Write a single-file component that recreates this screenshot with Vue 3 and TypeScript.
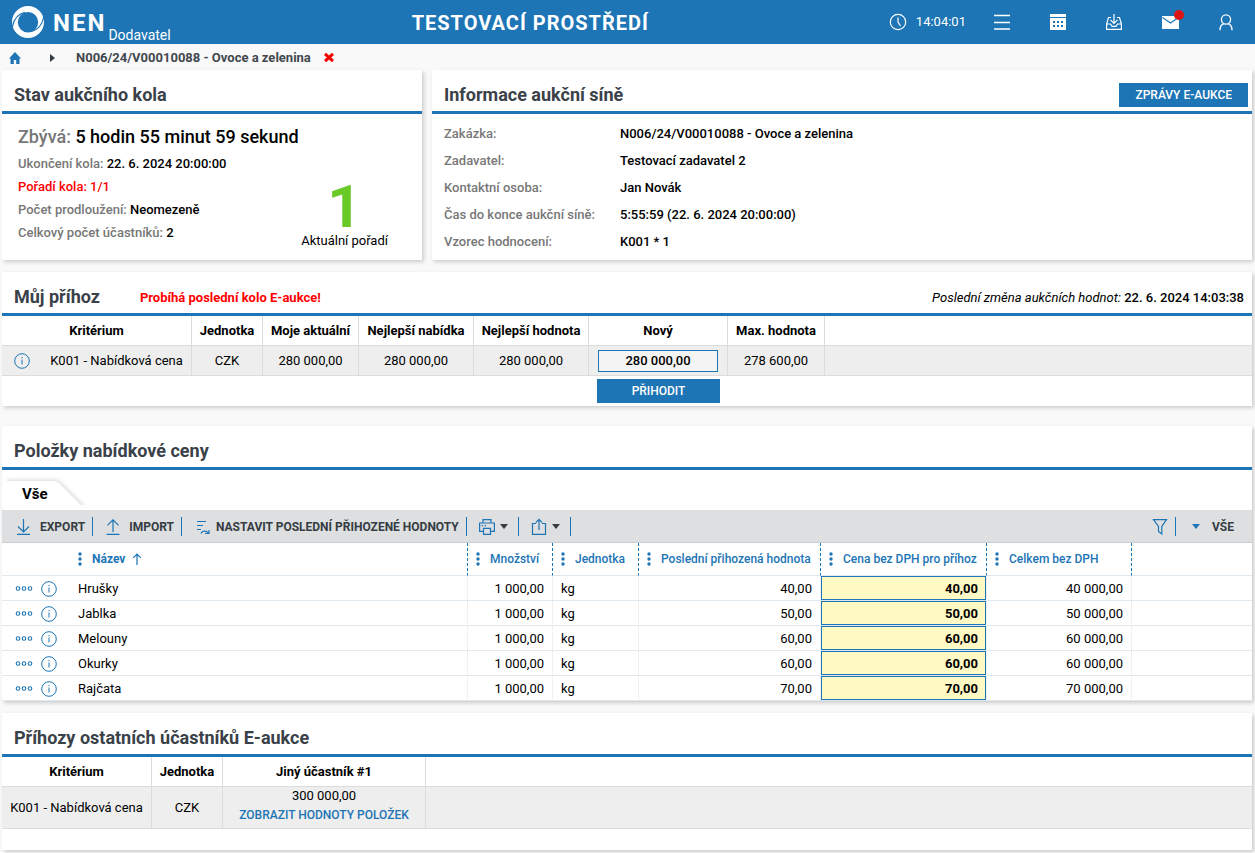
<script setup lang="ts">
import { ref } from 'vue'

interface Item {
  name: string
  quantity: string
  unit: string
  last: string
  price: string
  total: string
}

const items = ref<Item[]>([
  { name: 'Hrušky', quantity: '1 000,00', unit: 'kg', last: '40,00', price: '40,00', total: '40 000,00' },
  { name: 'Jablka', quantity: '1 000,00', unit: 'kg', last: '50,00', price: '50,00', total: '50 000,00' },
  { name: 'Melouny', quantity: '1 000,00', unit: 'kg', last: '60,00', price: '60,00', total: '60 000,00' },
  { name: 'Okurky', quantity: '1 000,00', unit: 'kg', last: '60,00', price: '60,00', total: '60 000,00' },
  { name: 'Rajčata', quantity: '1 000,00', unit: 'kg', last: '70,00', price: '70,00', total: '70 000,00' },
])

const columns: string[] = [
  'Množství',
  'Jednotka',
  'Poslední přihozená hodnota',
  'Cena bez DPH pro příhoz',
  'Celkem bez DPH',
]

const roundInfo: { label: string; value: string; alert?: boolean }[] = [
  { label: 'Ukončení kola:', value: '22. 6. 2024 20:00:00' },
  { label: 'Pořadí kola:', value: '1/1', alert: true },
  { label: 'Počet prodloužení:', value: 'Neomezeně' },
  { label: 'Celkový počet účastníků:', value: '2' },
]

const hallInfo: { label: string; value: string }[] = [
  { label: 'Zakázka:', value: 'N006/24/V00010088 - Ovoce a zelenina' },
  { label: 'Zadavatel:', value: 'Testovací zadavatel 2' },
  { label: 'Kontaktní osoba:', value: 'Jan Novák' },
  { label: 'Čas do konce aukční síně:', value: '5:55:59 (22. 6. 2024 20:00:00)' },
  { label: 'Vzorec hodnocení:', value: 'K001 * 1' },
]

const newBid = ref('280 000,00')
</script>

<template>
  <div class="page">
    <header class="topbar">
      <a href="#" class="brand">
        <svg class="logo" viewBox="0 0 32 32" aria-hidden="true">
          <path fill="#fff" fill-rule="evenodd" d="M16 0C24.800 0 32 7.200 32 16S24.800 32 16 32 0 24.800 0 16 7.200 0 16 0ZM16 6A10.200 10.200 0 1 0 16 26.400A10.200 10.200 0 1 0 16 6Z" />
          <path fill="none" stroke="#1d75b5" stroke-width="1.100" d="M0.300 21.500C1.500 14 6 8 13 6.400" />
          <path fill="none" stroke="#1d75b5" stroke-width="1.100" d="M31.700 10.500C30.500 18 26 24 19 25.600" />
        </svg>
        <span class="brand-name">NEN</span>
        <span class="brand-role">Dodavatel</span>
      </a>
      <h1 class="env">TESTOVACÍ PROSTŘEDÍ</h1>
      <nav class="tools" aria-label="Hlavní nabídka">
        <span class="clock">
          <svg class="ico18" viewBox="0 0 18 18" aria-hidden="true">
            <g fill="none" stroke="#fff" stroke-width="1.200"><circle cx="9" cy="9" r="7.700" /><path d="M9 4.500V9L11.500 13" /></g>
          </svg>
          <time>14:04:01</time>
        </span>
        <button type="button" class="tool" aria-label="Menu">
          <svg class="ico18" viewBox="0 0 18 18"><path stroke="#fff" stroke-width="1.400" d="M1 2.500H17M1 9.500H17M1 16H17" /></svg>
        </button>
        <button type="button" class="tool" aria-label="Kalendář">
          <svg class="ico18" viewBox="0 0 18 18">
            <path fill="#fff" d="M1 1H17V4H1ZM1 5H17V17H1Z" />
            <path fill="#1d75b5" d="M4 8h2v2H4zM8 8h2v2H8zM12 8h2v2h-2zM4 12h2v2H4zM8 12h2v2H8zM12 12h2v2h-2z" />
          </svg>
        </button>
        <button type="button" class="tool" aria-label="Doručené">
          <svg class="ico18" viewBox="0 0 18 18">
            <path fill="none" stroke="#fff" stroke-width="1.200" d="M9 1V10M5.500 6.800L9 10.300L12.500 6.800M6 4.500H3.500L1.600 11V16.400H16.400V11L14.500 4.500H12M1.600 11H5.500L7 13.300H11L12.500 11H16.400" />
          </svg>
        </button>
        <button type="button" class="tool" aria-label="Zprávy">
          <svg class="ico18" viewBox="0 0 18 18">
            <path fill="#fff" d="M1 3H18V16H1Z" />
            <path fill="none" stroke="#1d75b5" stroke-width="1.100" d="M1.500 4.500L9.500 10L17.500 4.500" />
          </svg>
          <span class="badge"></span>
        </button>
        <button type="button" class="tool" aria-label="Uživatel">
          <svg class="ico18" viewBox="0 0 18 18">
            <g fill="none" stroke="#fff" stroke-width="1.300"><circle cx="9" cy="6.500" r="4.600" /><path d="M3 17.200C3 13.500 4.500 11.500 7 10.700M15 17.200C15 13.500 13.500 11.500 11 10.700" /></g>
          </svg>
        </button>
      </nav>
    </header>

    <nav class="crumbs" aria-label="Drobečková navigace">
      <a href="#" class="home" aria-label="Domů">
        <svg class="ico12" viewBox="0 0 12 12"><path fill="#1d75b5" d="M6 0L12 6.600H10.500V12H7.200V8H4.800V12H1.500V6.600H0Z" /></svg>
      </a>
      <svg class="crumb-arrow" viewBox="0 0 5 8" aria-hidden="true"><path fill="#353c42" d="M0 0L5 4L0 8Z" /></svg>
      <a href="#" class="crumb">N006/24/V00010088 - Ovoce a zelenina</a>
      <button type="button" class="close" aria-label="Zavřít">
        <svg class="close-x" viewBox="0 0 10 9"><path stroke="#f60000" stroke-width="3" d="M1 0.800L9 8.200M9 0.800L1 8.200" /></svg>
      </button>
    </nav>

    <main class="content">
      <div class="pair">
        <section class="card">
          <div class="card-head"><h2>Stav aukčního kola</h2></div>
          <div class="round">
            <div class="round-info">
              <p class="remaining"><span class="label">Zbývá:</span> 5 hodin 55 minut 59 sekund</p>
              <p v-for="r in roundInfo" :key="r.label" :class="{ alert: r.alert }">
                <span class="label">{{ r.label }}</span> {{ r.value }}
              </p>
            </div>
            <div class="rank">
              <strong>1</strong>
              <span>Aktuální pořadí</span>
            </div>
          </div>
        </section>

        <section class="card">
          <div class="card-head">
            <h2>Informace aukční síně</h2>
            <button type="button" class="primary">ZPRÁVY E-AUKCE</button>
          </div>
          <dl class="hall">
            <template v-for="h in hallInfo" :key="h.label">
              <dt>{{ h.label }}</dt>
              <dd>{{ h.value }}</dd>
            </template>
          </dl>
        </section>
      </div>

      <section class="card bid-card">
        <div class="card-head">
          <h2>Můj příhoz</h2>
          <span class="warning">Probíhá poslední kolo E-aukce!</span>
          <span class="changed"><em>Poslední změna aukčních hodnot:</em> 22. 6. 2024 14:03:38</span>
        </div>
        <table class="grid">
          <colgroup>
            <col class="w40" /><col class="w150" /><col class="w71" /><col class="w96" /><col class="w115" /><col class="w115" /><col class="w139" /><col class="w97" /><col />
          </colgroup>
          <thead>
            <tr>
              <th colspan="2">Kritérium</th>
              <th>Jednotka</th>
              <th>Moje aktuální</th>
              <th>Nejlepší nabídka</th>
              <th>Nejlepší hodnota</th>
              <th id="new-bid">Nový</th>
              <th>Max. hodnota</th>
              <td></td>
            </tr>
          </thead>
          <tbody>
            <tr>
              <td class="open">
                <button type="button" class="icon-btn" aria-label="Detail kritéria">
                  <svg class="ico16" viewBox="0 0 16 16"><g fill="none" stroke="#1d75b5"><circle cx="8" cy="8" r="7.300" /><path d="M8 6.500V11.500M8 4V5.200" /></g></svg>
                </button>
              </td>
              <td>K001 - Nabídková cena</td>
              <td>CZK</td>
              <td>280 000,00</td>
              <td>280 000,00</td>
              <td>280 000,00</td>
              <td><input v-model="newBid" class="bid" type="text" aria-labelledby="new-bid" /></td>
              <td>278 600,00</td>
              <td></td>
            </tr>
          </tbody>
          <tfoot>
            <tr>
              <td colspan="6"></td>
              <td><button type="button" class="primary wide">PŘIHODIT</button></td>
              <td colspan="2"></td>
            </tr>
          </tfoot>
        </table>
      </section>

      <section class="card items-card">
        <div class="card-head"><h2>Položky nabídkové ceny</h2></div>
        <div class="tabs">
          <button type="button" class="tab">
            <svg class="tab-shape" viewBox="0 0 84 28" aria-hidden="true"><path fill="#fff" d="M0 4H49L53 6L79 32H0Z" /></svg>
            <span>Vše</span>
          </button>
        </div>
        <div class="toolbar">
          <button type="button" class="action">
            <svg class="ico16" viewBox="0 0 16 16"><path fill="none" stroke="#1d75b5" stroke-width="1.200" d="M7.500 0V13M2 7.500L7.500 13L13 7.500M1 15.400H14" /></svg>
            EXPORT
          </button>
          <button type="button" class="action">
            <svg class="ico16" viewBox="0 0 16 16"><path fill="none" stroke="#1d75b5" stroke-width="1.200" d="M8 13V0.800M2.500 6.300L8 0.800L13.500 6.300M1.500 15.400H14.500" /></svg>
            IMPORT
          </button>
          <button type="button" class="action tight">
            <svg class="ico16" viewBox="0 0 16 16"><path fill="none" stroke="#1d75b5" stroke-width="1.200" d="M3 2.500H12M3 6.500H9M3 10.500H7M7 14.500C8 11.500 12.500 11.500 14.500 14M11 14.500H15V11" /></svg>
            NASTAVIT POSLEDNÍ PŘIHOZENÉ HODNOTY
          </button>
          <button type="button" class="action drop" aria-label="Tisk">
            <svg class="ico18" viewBox="0 0 18 18">
              <path fill="none" stroke="#1d75b5" stroke-width="1.200" d="M5 5V1.600H13V5M5 13.400H1.600V5H16.400V13.400H13M5.500 10.400H12.500V16.400H5.500ZM3.500 7.600H5M6.500 7.600H8" />
            </svg>
            <svg class="caret" viewBox="0 0 8 5"><path fill="#353c42" d="M0 0H8L4 5Z" /></svg>
          </button>
          <button type="button" class="action drop" aria-label="Sdílet">
            <svg class="ico18" viewBox="0 0 18 18">
              <path fill="none" stroke="#1d75b5" stroke-width="1.200" d="M6 5.500H2.500V16.400H15.500V5.500H12M9 12V1.500M5.800 4.600L9 1.400L12.200 4.600" />
            </svg>
            <svg class="caret" viewBox="0 0 8 5"><path fill="#353c42" d="M0 0H8L4 5Z" /></svg>
          </button>
          <button type="button" class="action filter" aria-label="Filtr">
            <svg class="ico16" viewBox="0 0 16 16"><path fill="none" stroke="#1d75b5" stroke-width="1.200" d="M1.500 0.700H14.500L9.800 7.500V15L6.500 12.500V7.500Z" /></svg>
          </button>
          <button type="button" class="action all">
            <svg class="caret" viewBox="0 0 8 5"><path fill="#1d75b5" d="M0 0H8L4 5Z" /></svg>
            VŠE
          </button>
        </div>
        <table class="items">
          <colgroup>
            <col class="w68" /><col class="w398" /><col class="w85" /><col class="w86" /><col class="w182" /><col class="w166" /><col class="w145" /><col />
          </colgroup>
          <thead>
            <tr>
              <td class="plain"></td>
              <th>
                <span class="th">
                  <svg class="dots" viewBox="0 0 4 14"><g fill="#1d75b5"><circle cx="2" cy="2" r="1.700" /><circle cx="2" cy="7" r="1.700" /><circle cx="2" cy="12" r="1.700" /></g></svg>
                  <b>Název</b>
                  <svg class="sort" viewBox="0 0 10 12"><path fill="none" stroke="#1d75b5" stroke-width="1.200" d="M5 12V1M1.200 4.800L5 1L8.800 4.800" /></svg>
                </span>
              </th>
              <th v-for="(c, i) in columns" :id="'col-' + i" :key="c">
                <span class="th">
                  <svg class="dots" viewBox="0 0 4 14"><g fill="#1d75b5"><circle cx="2" cy="2" r="1.700" /><circle cx="2" cy="7" r="1.700" /><circle cx="2" cy="12" r="1.700" /></g></svg>
                  {{ c }}
                </span>
              </th>
              <td class="plain"></td>
            </tr>
          </thead>
          <tbody>
            <tr v-for="item in items" :key="item.name">
              <td class="plain">
                <span class="row-tools">
                  <button type="button" class="icon-btn" aria-label="Další akce">
                    <svg class="ico18" viewBox="0 0 18 18"><g fill="none" stroke="#1d75b5" stroke-width="1.100"><circle cx="3" cy="8.500" r="1.800" /><circle cx="9" cy="8.500" r="1.800" /><circle cx="15" cy="8.500" r="1.800" /></g></svg>
                  </button>
                  <button type="button" class="icon-btn" aria-label="Detail položky">
                    <svg class="ico16" viewBox="0 0 16 16"><g fill="none" stroke="#1d75b5"><circle cx="8" cy="8" r="7.300" /><path d="M8 6.500V11.500M8 4V5.200" /></g></svg>
                  </button>
                </span>
              </td>
              <td>{{ item.name }}</td>
              <td class="num">{{ item.quantity }}</td>
              <td>{{ item.unit }}</td>
              <td class="num">{{ item.last }}</td>
              <td class="editable"><input v-model="item.price" type="text" aria-labelledby="col-3" /></td>
              <td class="num">{{ item.total }}</td>
              <td class="plain"></td>
            </tr>
          </tbody>
        </table>
      </section>

      <section class="card others-card">
        <div class="card-head"><h2>Příhozy ostatních účastníků E-aukce</h2></div>
        <table class="grid">
          <colgroup>
            <col class="w150" /><col class="w71" /><col class="w203" /><col />
          </colgroup>
          <thead>
            <tr>
              <th>Kritérium</th>
              <th>Jednotka</th>
              <th>Jiný účastník #1</th>
              <td></td>
            </tr>
          </thead>
          <tbody>
            <tr class="tall">
              <td>K001 - Nabídková cena</td>
              <td>CZK</td>
              <td class="bidder">300 000,00<a href="#" class="show">ZOBRAZIT HODNOTY POLOŽEK</a></td>
              <td></td>
            </tr>
          </tbody>
        </table>
      </section>
    </main>
  </div>
</template>

<style>
body {
  margin: 0;
  background: #f9f9f9;
}
</style>

<style scoped>
.page,
.page * {
  box-sizing: border-box;
}
.page {
  font-family: Roboto, "Liberation Sans", sans-serif;
  font-size: 13px;
  line-height: 18px;
  color: #000;
}
h1, h2, p, dl, dd {
  margin: 0;
}
button, input {
  font: inherit;
  margin: 0;
}
button {
  border: 0;
  padding: 0;
  background: none;
  color: inherit;
  cursor: pointer;
}
a {
  text-decoration: none;
}
svg {
  display: block;
  flex: none;
}
.ico18 { width: 18px; height: 18px; }
.ico16 { width: 16px; height: 16px; }
.ico12 { width: 12px; height: 12px; }

.topbar {
  display: flex;
  justify-content: space-between;
  align-items: center;
  height: 44px;
  padding: 0 1px 0 12px;
  background: #1d75b5;
  color: #fff;
}
.brand {
  display: flex;
  align-items: center;
  height: 44px;
  padding-right: 9px;
  color: #fff;
}
.logo {
  width: 32px;
  height: 32px;
}
.brand-name {
  margin-left: 9px;
  padding-top: 2px;
  font-size: 24px;
  font-weight: 700;
  letter-spacing: 2px;
}
.brand-role {
  align-self: flex-end;
  margin-left: 2px;
  font-size: 14px;
}
.env {
  padding-top: 2px;
  font-size: 20px;
  font-weight: 700;
  letter-spacing: 1px;
}
.tools {
  display: flex;
  align-items: center;
}
.clock {
  display: flex;
  align-items: center;
  gap: 9px;
  padding: 0 8px;
}
.tool {
  display: flex;
  align-items: center;
  justify-content: center;
  position: relative;
  width: 56px;
  height: 44px;
}
.badge {
  position: absolute;
  top: 10px;
  left: 32px;
  width: 10px;
  height: 10px;
  border-radius: 50%;
  background: #dc1414;
}

.crumbs {
  display: flex;
  align-items: center;
  height: 26px;
  padding: 1px 0 0 9px;
}
.crumb-arrow {
  width: 5px;
  height: 8px;
  margin: 0 21px 0 29px;
}
.crumb {
  color: #41474d;
  font-weight: 700;
}
.close {
  margin-left: 13px;
}
.close-x {
  width: 10px;
  height: 9px;
}

.content {
  padding: 0 3px 3px 2px;
}
.pair {
  display: grid;
  grid-template-columns: 21fr 41fr;
  gap: 10px;
}
.card {
  background: #fff;
  box-shadow: 2px 2px 4px rgba(0, 0, 0, 0.18);
}
.card-head {
  display: flex;
  align-items: center;
  height: 44px;
  padding: 8px 4px 0 12px;
  border-bottom: 3px solid #1d75b5;
}
h2 {
  font-size: 18px;
  line-height: 24px;
  font-weight: 700;
  color: #3a4148;
}
.primary {
  height: 24px;
  padding: 0 16px;
  background: #1d75b5;
  color: #fff;
  font-size: 12px;
  font-weight: 500;
}
.card-head .primary {
  margin-left: auto;
}

.round {
  display: flex;
  justify-content: space-between;
  height: 146px;
  padding: 9px 34px 0 16px;
  font-weight: 500;
}
.round-info p {
  line-height: 23px;
}
.round-info .remaining {
  margin-bottom: 2px;
  font-size: 18px;
  line-height: 27px;
}
.label,
dt {
  color: #777;
}
.alert,
.alert .label {
  color: #f00;
}
.rank {
  display: flex;
  flex-direction: column;
  align-items: center;
  justify-content: flex-end;
  padding-bottom: 10px;
  font-weight: 400;
}
.rank strong {
  font-size: 60px;
  line-height: 50px;
  font-weight: 700;
  color: #69c926;
}
.hall {
  display: grid;
  grid-template-columns: 176px 1fr;
  padding: 6px 12px 0;
  line-height: 27px;
  font-weight: 500;
}

.bid-card { margin-top: 12px; }
.items-card { margin-top: 20px; }
.others-card { margin-top: 12px; padding-bottom: 21px; }
.warning {
  margin-left: 40px;
  padding-top: 2px;
  color: #f00;
  font-weight: 700;
}
.changed {
  margin: 0 4px 0 auto;
  padding-top: 2px;
  font-weight: 500;
}
.changed em {
  font-weight: 400;
}

table {
  width: 100%;
  table-layout: fixed;
  border-collapse: separate;
  border-spacing: 0;
}
th, td {
  padding: 0;
  white-space: nowrap;
}
.w40 { width: 40px; }
.w68 { width: 68px; }
.w71 { width: 71px; }
.w85 { width: 85px; }
.w86 { width: 86px; }
.w96 { width: 96px; }
.w97 { width: 97px; }
.w115 { width: 115px; }
.w139 { width: 139px; }
.w145 { width: 145px; }
.w150 { width: 150px; }
.w166 { width: 166px; }
.w182 { width: 182px; }
.w203 { width: 203px; }
.w398 { width: 398px; }

.grid th,
.grid td {
  height: 30px;
  text-align: center;
  border-right: 1px solid #dcdcdc;
  border-bottom: 1px solid #dcdcdc;
}
.grid th {
  font-weight: 700;
}
.grid tbody td {
  background: #eee;
}
.grid tr td:last-child,
.grid td.open,
.grid tfoot td {
  border-right: 0;
}
.grid tfoot td {
  border-bottom: 0;
}
.grid .tall td {
  height: 42px;
}
.grid .tall .bidder {
  padding-bottom: 3px;
}
.grid .icon-btn {
  margin-left: 12px;
}
.icon-btn {
  display: block;
}
.bid {
  display: block;
  width: 120px;
  height: 22px;
  margin: 0 auto;
  padding: 0;
  border: 1px solid #1d75b5;
  background: #f4f4f4;
  text-align: center;
  font-weight: 500;
}
.wide {
  width: 123px;
}
.show {
  display: block;
  line-height: 20px;
  font-size: 12px;
  font-weight: 500;
  color: #1d75b5;
}

.tabs {
  height: 40px;
  padding: 7px 0 0 4px;
}
.tab {
  display: block;
  position: relative;
  width: 84px;
  height: 28px;
  padding: 6px 0 0 16px;
  overflow: hidden;
  text-align: left;
  font-size: 15px;
  font-weight: 700;
}
.tab span {
  position: relative;
}
.tab-shape {
  position: absolute;
  top: 0;
  left: 0;
  width: 84px;
  height: 28px;
  overflow: hidden;
}
.tab-shape path {
  filter: drop-shadow(1px -1px 2px rgba(0, 0, 0, 0.16));
}
.toolbar {
  display: flex;
  align-items: center;
  height: 33px;
  padding: 1px 0 0 2px;
  background: #dddfe1;
  border-bottom: 1px solid #cbcdcf;
}
.action {
  display: flex;
  align-items: center;
  gap: 8px;
  height: 19px;
  padding: 0 7px 0 12px;
  border-right: 1px solid #1d75b5;
  font-size: 12px;
  font-weight: 700;
  color: #353c42;
}
.tight {
  gap: 6px;
}
.drop {
  gap: 4px;
  padding: 0 10px 0 11px;
}
.caret {
  width: 8px;
  height: 5px;
}
.filter {
  margin-left: auto;
}
.all {
  gap: 12px;
  padding: 0 18px 0 16px;
  border-right: 0;
}

.items th,
.items td {
  height: 25px;
  padding: 0 8px;
  border-right: 1px dotted #dfe3e6;
  border-bottom: 1px solid #dfe8ee;
}
.items tbody td {
  padding-top: 1px;
}
.items thead th,
.items thead td {
  height: 33px;
}
.items thead th {
  border-right: 1px dashed #1d75b5;
  font-size: 12px;
  font-weight: 500;
  color: #1d75b5;
  text-align: left;
}
.items .plain {
  border-right: 0;
}
.th {
  display: flex;
  align-items: center;
}
.th b {
  font-weight: 700;
}
.dots {
  width: 4px;
  height: 14px;
  margin-right: 10px;
}
.sort {
  width: 10px;
  height: 12px;
  margin-left: 7px;
}
.row-tools {
  display: flex;
  align-items: center;
  gap: 8px;
  padding-left: 5px;
}
.items .num {
  text-align: right;
}
.items tbody .editable {
  padding: 0;
}
.editable input {
  display: block;
  width: 100%;
  height: 24px;
  padding: 0 7px;
  border: 1px solid #1d75b5;
  border-radius: 0;
  background: #fff9c4;
  text-align: right;
  font-weight: 700;
}
</style>
